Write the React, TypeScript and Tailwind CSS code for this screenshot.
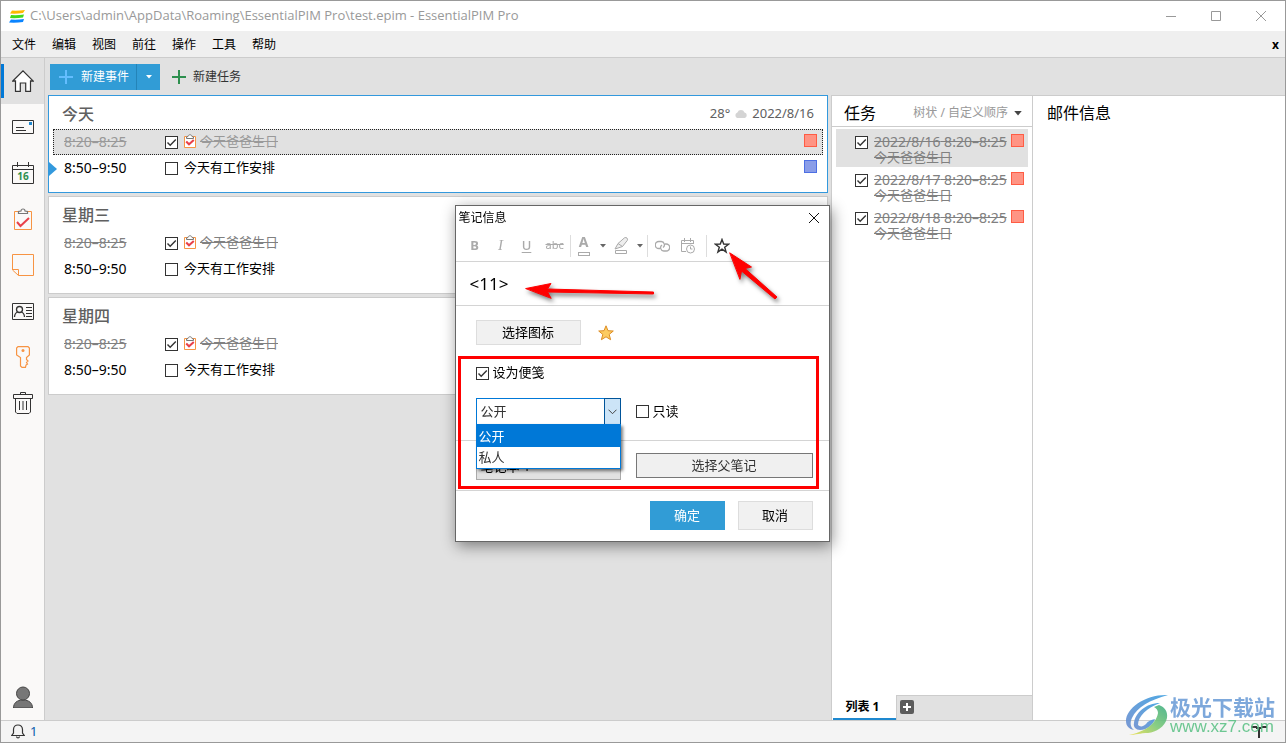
import type { ReactNode } from "react"
import clsx from "clsx"

const menus = ["文件", "编辑", "视图", "前往", "操作", "工具", "帮助"]
const days = ["今天", "星期三", "星期四"]
const tasks = ["2022/8/16", "2022/8/17", "2022/8/18"]

function Check({ id, checked, label }: { id?: string; checked?: boolean; label?: string }) {
    return (
        <span className="relative inline-flex size-[13px] shrink-0">
            <input
                id={id}
                type="checkbox"
                aria-label={label}
                defaultChecked={checked}
                className="peer size-[13px] appearance-none border border-[#333] bg-white"
            />
            <svg viewBox="0 0 13 13" className="pointer-events-none absolute inset-0 hidden size-[13px] peer-checked:block" fill="none" stroke="#333" strokeWidth="1.4">
                <path d="M2.5 6.5 5.2 9.3 10.8 3.5" />
            </svg>
        </span>
    )
}

function Clipboard({ className }: { className: string }) {
    return (
        <svg viewBox="0 0 18 22" className={className} fill="none">
            <path d="M.5 3.5h17v18H.5z" fill="#faf9f8" stroke="#f79443" />
            <path d="M4.500 5.500V3.400L7 3a2 2 0 0 1 4 0l2.500.4v2.100z" fill="#faf9f8" stroke="#777" strokeWidth="1.200" />
            <path d="m3 14 3.500 4L15 10" stroke="#e8414a" strokeWidth="2" />
        </svg>
    )
}

function SmallClipboard() {
    return (
        <svg viewBox="0 0 12 14" className="mb-0.5 ml-1.5 mr-1 h-3.5 w-3 shrink-0" fill="none">
            <path d="M.5 2.500h11v11H.5z" fill="#fff" stroke="#f79443" />
            <path d="M2.500 4.500V3L4 2.500C4.200.2 7.800.2 8 2.500l1.500.5v1.500z" fill="#fff" stroke="#777" />
            <path d="M2.200 7.500 5 10.300 9.800 6" stroke="#e8414a" strokeWidth="2" />
        </svg>
    )
}

function Caret({ className }: { className?: string }) {
    return (
        <svg viewBox="0 0 6 4" className={clsx("h-1 w-1.5 shrink-0", className)} fill="currentColor">
            <path d="M0 0h6L3 3.500z" />
        </svg>
    )
}

function EventRow({ time, title, done, selected, swatch }: {
    time: string
    title: string
    done?: boolean
    selected?: boolean
    swatch?: ReactNode
}) {
    return (
        <div
            className={clsx(
                "mx-1 flex h-[26px] items-center border pl-2.5 pr-[5px]",
                selected ? "border-dotted border-[#222] bg-[#e1e1e1]" : "border-transparent"
            )}
        >
            <span className={clsx("w-[101px] text-sm", done && "line-through", selected ? "text-[#999]" : done ? "text-[#808080]" : "text-black")}>
                {time}
            </span>
            <Check checked={done} label={title} />
            {done && <SmallClipboard />}
            <span className={clsx("text-[13px]", done ? "line-through" : "ml-1.5", selected ? "text-[#999]" : done ? "text-[#808080]" : "text-black")}>
                {title}
            </span>
            <span className="ml-auto mb-1">{swatch}</span>
        </div>
    )
}

function DayCard({ name, today }: { name: string; today?: boolean }) {
    return (
        <section className={clsx("relative h-[98px] border bg-white", today ? "border-[#3399dd]" : "border-[#ccc]")}>
            <header className="flex h-[33px] items-center px-[13px] pt-0.5">
                <h2 className="text-base font-medium text-[#606060]">{name}</h2>
                {today && (
                    <div className="ml-auto flex items-center text-[13px] text-[#606060]">
                        28°
                        <svg viewBox="0 0 14 9" className="mx-1 h-[9px] w-3.5" fill="#d4d4d4">
                            <path d="M3 9a3 3 0 0 1 .4-5.500A3.800 3.800 0 0 1 10.500 3.500 2.900 2.900 0 0 1 11 9z" />
                        </svg>
                        2022/8/16
                    </div>
                )}
            </header>
            <EventRow
                time="8:20–8:25"
                title="今天爸爸生日"
                done
                selected={today}
                swatch={today && <i className="block size-[13px] border border-[#ff5c44] bg-[#ff9484]" />}
            />
            <EventRow
                time="8:50–9:50"
                title="今天有工作安排"
                swatch={today && <i className="block size-[13px] border border-[#4d6fe3] bg-[#8a9de8]" />}
            />
            {today && (
                <svg viewBox="0 0 8 14" className="absolute left-0 top-[66px] h-3.5 w-2" fill="#3399dd">
                    <path d="M0 0 8 7 0 14z" />
                </svg>
            )}
        </section>
    )
}

function NavButton({ label, active, children }: { label: string; active?: boolean; children: ReactNode }) {
    return (
        <button
            type="button"
            aria-label={label}
            className={clsx("flex h-[46px] w-full items-center justify-center", active && "bg-[#e1e1e1]")}
        >
            {children}
        </button>
    )
}

function Sidebar() {
    return (
        <nav className="relative flex w-11 shrink-0 flex-col border-r border-[#ccc] bg-[#faf9f8]">
            <span className="absolute left-0 top-1.5 h-[34px] w-[3px] bg-[#0078d7]" />
            <NavButton label="主页" active>
                <svg viewBox="0 0 22 22" className="size-[22px]" fill="#fff" stroke="#333" strokeWidth="1.200">
                    <path d="M.8 11 11 .9 21.200 11l-2.700-.2v10.500h-4.800v-8.300H8.300v8.300H3.500V10.800z" />
                </svg>
            </NavButton>
            <NavButton label="邮件">
                <svg viewBox="0 0 22 14" className="h-3.5 w-[22px]" fill="none" stroke="#333">
                    <path d="M.5.5h21v13H.5zM4 7.500h8M4 10.500h10" />
                    <path d="M17 2h3v3h-3z" fill="#1e88cf" stroke="none" />
                </svg>
            </NavButton>
            <NavButton label="日历">
                <svg viewBox="0 0 22 22" className="size-[22px]" fill="none" stroke="#333">
                    <path d="M.5 3.500h21v18H.5zM.5 7.500h21M5.500 0v5M16.500 0v5" />
                    <text x="11" y="18" textAnchor="middle" fontSize="10" fontWeight="700" fill="#2d8f4e" stroke="none">16</text>
                </svg>
            </NavButton>
            <NavButton label="任务"><Clipboard className="h-[22px] w-[18px]" /></NavButton>
            <NavButton label="便笺">
                <svg viewBox="0 0 22 22" className="size-[22px]" fill="none" stroke="#f79443">
                    <path d="M.5.5h21v21H6.500l-6-5.500zM.5 15.500h6v6" />
                </svg>
            </NavButton>
            <NavButton label="联系人">
                <svg viewBox="0 0 22 17" className="h-[17px] w-[22px]" fill="none" stroke="#333">
                    <path d="M.5.5h21v16H.5zM14 4.500h6M14 7.500h6M14 10.500h6M14 13.500h6" />
                    <circle cx="7.500" cy="6.500" r="3" strokeWidth="1.300" />
                    <path d="M2.500 14c.2-3 1.500-4.500 3.200-5M12.500 14c-.2-3-1.500-4.500-3.200-5" strokeWidth="1.300" />
                </svg>
            </NavButton>
            <NavButton label="密码">
                <svg viewBox="0 0 14 22" className="h-[22px] w-3.5" fill="none" stroke="#f79443" strokeWidth="1.200">
                    <path d="M2 .6h10l1.400 1.400v7L10.500 11.500v2L12 15l-1.500 1.500L11.500 18l-1.500 1-.5 2.400H6L4.500 20v-8.500L.6 9V2z" />
                    <circle cx="7" cy="4.500" r="1.500" fill="#f79443" stroke="none" />
                </svg>
            </NavButton>
            <NavButton label="回收站">
                <svg viewBox="0 0 20 22" className="h-[22px] w-5" fill="none" stroke="#333">
                    <path d="M.5 2.500h19v4H.5zM7.500 2.500v-2h5v2M2.500 6.500v13.500l1.500 1.500h12l1.500-1.500V6.500M6.500 9v9M10 9v9M13.500 9v9" />
                </svg>
            </NavButton>
            <button type="button" aria-label="用户" className="mt-auto flex h-[46px] items-center justify-center">
                <svg viewBox="0 0 20 22" className="h-[22px] w-5" fill="#777" stroke="#444">
                    <path d="M.5 22c0-5 3.500-8 9.500-8s9.500 3 9.500 8z" />
                    <circle cx="10" cy="7.500" r="6.500" />
                </svg>
            </button>
        </nav>
    )
}

function TaskPanel() {
    return (
        <aside className="ml-[3px] flex w-[202px] shrink-0 flex-col border-x border-t border-[#ccc] bg-white">
            <header className="flex h-[31px] items-center border-b border-[#ccc] pl-3 pr-2.5 pt-1">
                <h2 className="text-base">任务</h2>
                <button type="button" className="ml-auto flex items-center gap-1 whitespace-nowrap text-xs text-[#999]">
                    树状 / 自定义顺序
                    <Caret className="ml-0.5 h-[5px] w-2 text-[#444]" />
                </button>
            </header>
            <ul className="flex-1 px-1 pt-0.5">
                {tasks.map((date, i) => (
                    <li key={date} className={clsx("flex h-[38px] items-start pl-[19px] pr-1 pt-[5px]", i === 0 && "bg-[#e1e1e1]")}>
                        <span className="mt-0.5 flex"><Check checked label={date} /></span>
                        <p className="ml-1.5 whitespace-nowrap text-[#808080] line-through">
                            <span className="block text-sm leading-4">{date} 8:20–8:25</span>
                            <span className="block text-[13px] leading-[14px]">今天爸爸生日</span>
                        </p>
                        <i className="ml-auto size-[13px] border border-[#ff5c44] bg-[#ff9484]" />
                    </li>
                ))}
            </ul>
            <div className="flex h-[25px]">
                <button type="button" className="ml-px w-[63px] border-b-2 border-[#1e88cf] pr-1 text-xs font-bold">列表 1</button>
                <div className="flex flex-1 items-center border-l border-t border-[#ccc] bg-[#e1e1e1] pb-0.5 pl-[3px]">
                    <button type="button" aria-label="添加列表" className="size-3.5 rounded-xs bg-[#5c5c5c]">
                        <svg viewBox="0 0 14 14" className="size-3.5" stroke="#fff" strokeWidth="2"><path d="M7 3v8M3 7h8" /></svg>
                    </button>
                </div>
            </div>
        </aside>
    )
}

function FormatBar() {
    return (
        <div className="flex h-8 items-center border-b border-[#d4d4d4] pl-3 text-[13px] text-[#aaa]">
            <button type="button" className="w-3.5 font-bold">B</button>
            <button type="button" className="ml-3 w-3.5 font-['Liberation_Serif'] text-[15px] italic">I</button>
            <button type="button" className="ml-3 w-3.5 font-medium underline underline-offset-2">U</button>
            <button type="button" className="ml-3 w-[17px] text-[11px] line-through">abc</button>
            <span className="mx-[7px] h-[22px] w-px bg-[#ddd]" />
            <button type="button" className="flex w-3 flex-col items-center text-sm font-bold leading-3">
                A
                <i className="mt-1 block h-1 w-3 border border-[#aaa]" />
            </button>
            <Caret className="ml-2.5 text-[#666]" />
            <button type="button" aria-label="突出显示" className="ml-2">
                <svg viewBox="0 0 15 17" className="h-[17px] w-[15px]" fill="none" stroke="#aaa">
                    <path d="m1 12 3-5.500L10.500.8q1.500-.8 2.500.3t.3 2.300L8.500 9.500zM4 6.500 8.500 9.500" fill="#eee" />
                    <path d="M1.500 13.500h11v3h-11z" />
                </svg>
            </button>
            <Caret className="ml-2 text-[#666]" />
            <span className="ml-1 mr-[7px] h-[22px] w-px bg-[#ddd]" />
            <button type="button" aria-label="链接">
                <svg viewBox="0 0 15 12" className="h-3 w-[15px]" fill="none" stroke="#aaa" strokeWidth="1.300">
                    <path d="M5 8.500H3.800A3.300 3.300 0 0 1 3.800 1.500h2.400A3.300 3.300 0 0 1 8 7.500" />
                    <path d="M10 4h1.200a3.300 3.300 0 0 1 0 7H8.800A3.300 3.300 0 0 1 7 5" />
                </svg>
            </button>
            <button type="button" aria-label="插入时间" className="ml-2.5">
                <svg viewBox="0 0 16 16" className="size-4" fill="none" stroke="#aaa">
                    <path d="M6 13.500H1.500v-11h12V6M1.500 5.500h12M4.500 0v4M10.500 0v4" />
                    <circle cx="10.500" cy="11" r="4" />
                    <path d="M10.500 8.500V11h2" />
                </svg>
            </button>
            <span className="ml-2.5 mr-[7px] h-[22px] w-px bg-[#ddd]" />
            <button type="button" aria-label="图标">
                <svg viewBox="0 0 16 16" className="size-4" fill="#fff" stroke="#333" strokeWidth="1.400">
                    <path d="m8 1.500 1.700 4.600 4.900.1-3.900 3 1.400 4.800L8 11.200 3.900 14l1.400-4.800-3.900-3 4.900-.1z" />
                </svg>
            </button>
        </div>
    )
}

function NoteDialog() {
    return (
        <div role="dialog" aria-label="笔记信息" className="relative w-[375px] border border-[#666] bg-white text-[13px] shadow-[2px_4px_14px_rgba(0,0,0,0.45)]">
            <header className="flex h-6 items-center justify-between pl-[3px] pr-2.5 text-xs">
                笔记信息
                <button type="button" aria-label="关闭">
                    <svg viewBox="0 0 10 10" className="size-2.5" stroke="#111"><path d="m0 0 10 10M10 0 0 10" /></svg>
                </button>
            </header>
            <FormatBar />
            <p className="flex h-11 items-center border-b border-[#d4d4d4] pl-3.5 text-[17px]">&lt;11&gt;</p>
            <div className="flex items-center px-5 pt-3.5">
                <button type="button" className="h-[25px] w-[105px] border border-[#ddd] bg-[#f1f1f1]">选择图标</button>
                <svg viewBox="0 0 16 16" className="ml-[17px] size-4" fill="#fccb61" stroke="#dc8d26">
                    <path d="m8 .8 2 4.900 5.300.3-4.100 3.400 1.400 5.300L8 11.800l-4.600 2.900 1.400-5.300L.7 6 6 5.700z" />
                </svg>
            </div>
            <div className="flex h-24 flex-col border-b border-[#d4d4d4] px-5 pt-[18px]">
                <label htmlFor="sticky" className="flex h-5 items-center gap-1">
                    <Check id="sticky" checked />
                    设为便笺
                </label>
                <div className="mt-[15px] flex items-center">
                    <div className="relative">
                        <select aria-label="可见性" className="block h-[27px] w-[145px] appearance-none border border-[#0078d7] bg-white pl-1 text-[13px] text-[#333]">
                            <option>公开</option>
                            <option>私人</option>
                        </select>
                        <span className="pointer-events-none absolute inset-y-0 right-0 flex w-[17px] items-center justify-center border border-[#005499] bg-[#cce4f7]">
                            <svg viewBox="0 0 9 6" className="h-1.5 w-[9px]" fill="none" stroke="#444"><path d="m.5.7 4 4 4-4" /></svg>
                        </span>
                        <ul role="listbox" aria-label="可见性选项" className="absolute left-0 top-[26px] z-10 w-[145px] border border-[#0078d7] bg-white text-[#333] shadow-[2px_2px_3px_rgba(0,0,0,0.5)]">
                            <li role="option" aria-selected="true" className="h-[22px] bg-[#0078d7] pl-0.5 leading-[22px] text-white">公开</li>
                            <li role="option" aria-selected="false" className="h-[21px] pl-0.5 leading-[20px]">私人</li>
                        </ul>
                    </div>
                    <label htmlFor="readonly" className="ml-[15px] flex items-center gap-1">
                        <Check id="readonly" />
                        只读
                    </label>
                </div>
            </div>
            <div className="flex h-[50px] items-start justify-between border-b border-[#d4d4d4] pl-5 pr-4 pt-3">
                <button type="button" className="h-[27px] w-[145px] border border-[#aaa] bg-[#e1e1e1] pl-1 text-left">笔记本 1</button>
                <button type="button" className="h-[25px] w-[177px] border border-[#777] bg-[#f0f0f0] text-[#333]">选择父笔记</button>
            </div>
            <footer className="flex justify-end gap-[13px] pb-[11px] pr-4 pt-2.5">
                <button type="button" className="h-[29px] w-[75px] bg-[#319cd6] text-white">确定</button>
                <button type="button" className="h-[29px] w-[75px] border border-[#ddd] bg-[#f1f1f1]">取消</button>
            </footer>
            {/* highlight frame and pointers */}
            <div className="pointer-events-none absolute left-0.5 top-[150px] z-20 h-[133px] w-[361px] border-[3px] border-[#ff0000]" />
            <svg viewBox="0 0 375 110" className="pointer-events-none absolute -left-px -top-px z-20 h-[110px] w-[375px] drop-shadow-[2px_3px_2px_rgba(0,0,0,0.5)]" fill="#f00" stroke="#f00" strokeLinecap="round" strokeLinejoin="round">
                <path d="m71 83.500 25-5-3.500 5.500 106 3v2L92.500 87l3.500 6z" />
                <path d="m275 48 21.500 14-6.500 1.500L322 92l-2 2L286.500 66l-1.500 8z" />
            </svg>
        </div>
    )
}

function Watermark() {
    return (
        <div className="pointer-events-none absolute bottom-1.5 right-2.5 z-30 flex items-center opacity-90">
            <svg viewBox="0 0 44 42" className="h-[42px] w-11">
                <defs>
                    <linearGradient id="swoosh" x1="1" y1="0" x2="0" y2="1">
                        <stop offset="0" stopColor="#3d9fe0" />
                        <stop offset="1" stopColor="#6d8fd0" />
                    </linearGradient>
                    <linearGradient id="leaf" x1="1" y1="0" x2="0" y2="1">
                        <stop offset="0" stopColor="#3fae85" />
                        <stop offset=".5" stopColor="#7fca78" />
                        <stop offset="1" stopColor="#f0e04c" />
                    </linearGradient>
                </defs>
                <path d="M42 1C20 0 0 14 0 27c0 5 3 8 8 9-4-3-4-8-2-12C11 13 24 6 42 1z" fill="url(#swoosh)" />
                <path d="M34 9C20 9 9 19 8 29c-1 4 2 7 6 7 7 0 13-5 15-11-4 1-7 2-9 5-3 3-6 3-8 1 0-9 9-17 22-22z" fill="url(#swoosh)" />
                <path d="M33 11c6 2 9 7 8 13-2 9-11 14-19 15-8 0-12 2-19 2 14-3 27-10 29-22 0-3-2-5-4-6z" fill="url(#leaf)" />
            </svg>
            <div className="whitespace-nowrap">
                <p className="text-[21px] font-bold leading-6 text-[#6f9fd8]">极光下载站</p>
                <p className="font-['Liberation_Sans'] text-[17px] leading-4 text-[#5fc288]">www.xz7.com</p>
            </div>
        </div>
    )
}

export default function App() {
    return (
        <div className="relative flex min-h-screen flex-col border border-[#999] bg-[#e1e1e1] font-['Noto_Sans','Noto_Sans_CJK_SC',sans-serif] text-black">
            <header className="flex h-[30px] items-center bg-white pl-2 pr-px font-['Open_Sans'] text-[13px] text-[#999]">
                <svg viewBox="0 0 16 13" className="mr-[5px] h-[13px] w-4">
                    <path d="M3 .5q5 .5 13-.5l-2 3Q7 4 1 3.500z" fill="#ffb900" />
                    <path d="M2 5q6 .5 13-.5l-1 3Q7 8.500 1 8z" fill="#43d91c" />
                    <path d="M2 9.500q6 .5 13-.5l-1 3Q7 13 0 12.500z" fill="#0a84ff" />
                </svg>
                C:\Users\admin\AppData\Roaming\EssentialPIM Pro\test.epim - EssentialPIM Pro
                <div className="ml-auto flex">
                    <button type="button" aria-label="最小化" className="flex w-[45px] justify-center">
                        <svg viewBox="0 0 10 10" className="size-2.5" stroke="#999"><path d="M0 5.500h10" /></svg>
                    </button>
                    <button type="button" aria-label="最大化" className="flex w-[45px] justify-center">
                        <svg viewBox="0 0 10 10" className="size-2.5" fill="none" stroke="#999"><path d="M.5.5h9v9h-9z" /></svg>
                    </button>
                    <button type="button" aria-label="关闭窗口" className="flex w-[46px] justify-center">
                        <svg viewBox="0 0 10 10" className="size-2.5" stroke="#999"><path d="m0 0 10 10M10 0 0 10" /></svg>
                    </button>
                </div>
            </header>
            <div className="flex h-[27px] items-center border-b border-[#ccc] bg-[#efefef] pl-[3px] pr-1.5 pt-0.5 text-xs">
                {menus.map((m) => (
                    <button key={m} type="button" className="px-2">{m}</button>
                ))}
                <button type="button" aria-label="关闭文件" className="ml-auto font-bold">x</button>
            </div>
            <div className="flex flex-1">
                <Sidebar />
                <div className="flex min-w-0 flex-1 flex-col">
                    <div className="flex h-[37px] items-center pl-[5px] text-xs">
                        <div className="flex h-[26px] bg-[#319cd6] text-white">
                            <button type="button" className="flex w-[87px] items-center gap-2 border-r border-[#2484b8] pl-[9px]">
                                <svg viewBox="0 0 14 14" className="size-3.5 shrink-0" stroke="#63bdff" strokeWidth="2"><path d="M7 0v14M0 7h14" /></svg>
                                <span className="whitespace-nowrap">新建事件</span>
                            </button>
                            <button type="button" aria-label="更多新建选项" className="flex w-[23px] items-center justify-center"><Caret /></button>
                        </div>
                        <button type="button" className="ml-3 flex items-center gap-[7px] text-[#333]">
                            <svg viewBox="0 0 14 14" className="size-3.5" stroke="#2d8f4e" strokeWidth="2"><path d="M7 0v14M0 7h14" /></svg>
                            新建任务
                        </button>
                    </div>
                    <div className="flex flex-1">
                        <main className="ml-[3px] flex min-w-0 flex-1 flex-col gap-[3px]">
                            {days.map((d, i) => <DayCard key={d} name={d} today={i === 0} />)}
                        </main>
                        <TaskPanel />
                        <section className="w-[252px] shrink-0 border-t border-[#ccc] bg-white pl-3.5 pt-[5px]">
                            <h2 className="text-base">邮件信息</h2>
                        </section>
                    </div>
                </div>
            </div>
            <footer className="flex h-[22px] items-center border-t border-[#ccc] bg-[#f4f4f4] pl-2.5 text-[13px]">
                <svg viewBox="0 0 14 15" className="mr-[5px] h-[15px] w-3.5" fill="none" stroke="#333" strokeWidth="1.200">
                    <path d="M.8 11.500h12.400L11.500 9V5.500C11.500 2.500 9.500 1 7 1S2.500 2.500 2.500 5.500V9z" />
                    <path d="M5.500 12.500c.3 1.800 2.700 1.800 3 0" />
                </svg>
                <span className="text-[#0b5cad]">1</span>
                <svg viewBox="0 0 16 12" className="ml-auto mr-[18px] h-3 w-4" stroke="#333" strokeWidth="2"><path d="M0 1h6M10 1h6M5 2h6M8 3v9" /></svg>
            </footer>
            <Watermark />
            <div className="fixed inset-0 flex items-center justify-center pr-0.5 pt-1">
                <NoteDialog />
            </div>
        </div>
    )
}
